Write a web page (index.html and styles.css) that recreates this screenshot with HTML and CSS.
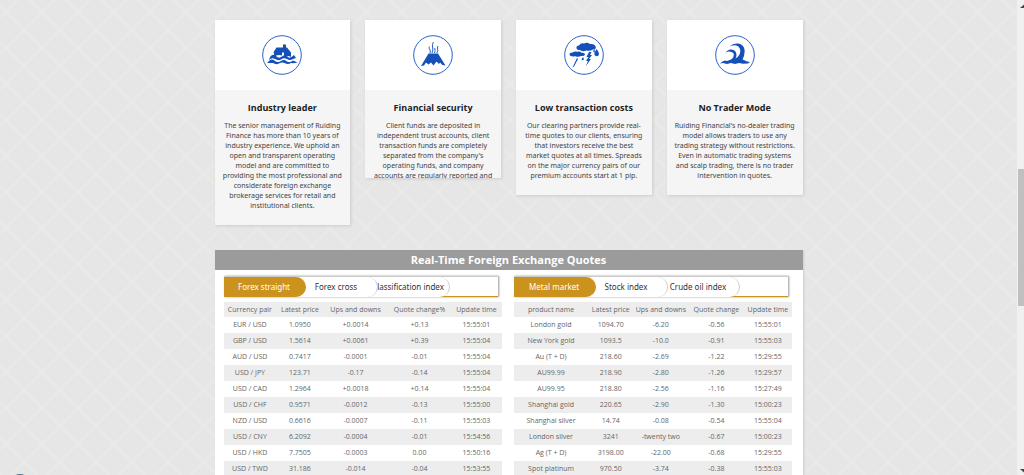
FILE: index.html
```html
<!DOCTYPE html>
<html lang="en">
<head>
<meta charset="utf-8">
<title>Real-Time Foreign Exchange Quotes</title>
<link rel="stylesheet" href="styles.css">
</head>
<body>
<div class="shell">
  <main class="page">
    <section class="features">
      <article class="card">
        <div class="card-icon">
          <svg viewBox="0 0 40 40" aria-hidden="true">
            <circle class="ring" cx="20" cy="20" r="19.3"/>
            <path d="M12 22V17.5L11 18L14.5 12.5H21V9.5H24V12.5H25L29 17.5V22Q26 20 24 22L22 20.5V17.5H20V20.5L17 20Q14 20 12 22Z"/>
            <path d="M8 22Q11 18 14 21Q17 24 20 21.5Q23 19 26 22Q28 24 32 20L34 23L31 24Q28 26 25 24Q22 22.500 19 24.500Q16 26 13 24Q10 22 7 25Z"/>
            <path d="M5 28L7.500 25.500Q10 23.500 13 26Q16 28 19 26Q22 24 25 26.500Q28 28 31 25.500L35.500 27.500Q32 28.500 29 28Q26 30 23 28.300Q20 26.800 17 28.500Q14 30 11 28Z"/>
          </svg>
        </div>
        <h2 class="card-title">Industry leader</h2>
        <p class="card-text">The senior management of Ruiding Finance has more than 10 years of industry experience. We uphold an open and transparent operating model and are committed to providing the most professional and considerate foreign exchange brokerage services for retail and institutional clients.</p>
      </article>
      <article class="card card-clipped">
        <div class="card-icon">
          <svg viewBox="0 0 40 40" aria-hidden="true">
            <circle class="ring" cx="20" cy="20" r="19.3"/>
            <path d="M15.500 18.500H25L32.500 30.500L29.500 30L27 27.500L26 29L23.500 26.500L20.500 30.500L18 27.500L15.500 29.500L13 27.500L11 30.500L8 31Z"/>
            <path class="smoke" d="M17 18Q18 16 16.500 14Q15.500 13 16.500 11.500M19 18Q20.500 15 19.500 12Q19 9 20.500 7M21.500 18Q22.500 16 21.800 13M23.800 18Q25.500 16 24.500 13Q24.500 12 25 11"/>
          </svg>
        </div>
        <h2 class="card-title">Financial security</h2>
        <p class="card-text">Client funds are deposited in independent trust accounts, client transaction funds are completely separated from the company's operating funds, and company accounts are regularly reported and</p>
      </article>
      <article class="card">
        <div class="card-icon">
          <svg viewBox="0 0 40 40" aria-hidden="true">
            <circle class="ring" cx="20" cy="20" r="19.3"/>
            <path d="M12.500 13Q12 10.500 15 10.500Q16.500 7.800 20 8.500Q23 6.800 26 9Q31 8.500 31.500 11.500Q33 14 29 14.500Q26 16.500 22.500 15.500Q18 17 16 15Q12.500 15 12.500 13Z"/>
            <path d="M5.500 19.500Q5.500 17.500 8.500 17.500Q10.500 15.800 13 16.800Q16 16 17.500 17.800Q21 17.500 21 19.500Q20.500 21.300 17 21Q14.500 22.500 11.500 21.300Q6 22 5.500 19.500Z"/>
            <path d="M13 23L8.500 32.500L10 31.500L14 24ZM25 17L22.500 22H24.500L22 26H24L21.500 31.500L27 24H25L28 20H26L27.500 17ZM32.500 14Q36 18 34.500 20.500Q32 22 30.500 20Q30 18 32.500 14ZM19 22Q20.500 24 19.500 25Q18 25.500 17.500 24.500ZM29 16L31 14L30.500 18Z"/>
          </svg>
        </div>
        <h2 class="card-title">Low transaction costs</h2>
        <p class="card-text">Our clearing partners provide real-time quotes to our clients, ensuring that investors receive the best market quotes at all times. Spreads on the major currency pairs of our premium accounts start at 1 pip.</p>
      </article>
      <article class="card">
        <div class="card-icon">
          <svg viewBox="0 0 40 40" aria-hidden="true">
            <circle class="ring" cx="20" cy="20" r="19.3"/>
            <path d="M14.500 11.500Q18 8 23 8.500Q29.500 9.500 29.700 16Q29.500 21 27.500 24.500L30 25.500L32 26.500L35 27L33 28.500L28 28.800L24 28L20 29L16 28L12 29L8 28L5 28.500L7.500 26.500L10 25.500L12 26L16 24.500Q19 22.500 18.800 19Q18 16.500 13.500 16.500Q11.800 16.800 10.500 18Q12.500 14.200 16.500 14.500Q21 15 21.500 19.500Q21.500 21.500 20.500 23.500Q25.500 20.500 25.300 15.500Q24.500 10.500 20 10.300Q17 10.300 14.500 11.500Z"/>
          </svg>
        </div>
        <h2 class="card-title">No Trader Mode</h2>
        <p class="card-text">Ruiding Financial's no-dealer trading model allows traders to use any trading strategy without restrictions. Even in automatic trading systems and scalp trading, there is no trader intervention in quotes.</p>
      </article>
    </section>

    <section class="quotes">
      <h2 class="quotes-title">Real-Time Foreign Exchange Quotes</h2>
      <div class="quotes-body">
        <div class="market">
          <div class="tabs">
            <button class="tab tab-active" type="button">Forex straight</button>
            <button class="tab" type="button">Forex cross</button>
            <button class="tab" type="button">Classification index</button>
          </div>
          <table class="rates">
            <colgroup><col class="f1"><col class="f2"><col class="f3"><col class="f4"><col class="f5"></colgroup>
            <thead><tr><th>Currency pair</th><th>Latest price</th><th>Ups and downs</th><th>Quote change%</th><th>Update time</th></tr></thead>
            <tbody>
              <tr><td>EUR / USD</td><td>1.0950</td><td>+0.0014</td><td>+0.13</td><td>15:55:01</td></tr>
              <tr><td>GBP / USD</td><td>1.5614</td><td>+0.0061</td><td>+0.39</td><td>15:55:04</td></tr>
              <tr><td>AUD / USD</td><td>0.7417</td><td>-0.0001</td><td>-0.01</td><td>15:55:04</td></tr>
              <tr><td>USD / JPY</td><td>123.71</td><td>-0.17</td><td>-0.14</td><td>15:55:04</td></tr>
              <tr><td>USD / CAD</td><td>1.2964</td><td>+0.0018</td><td>+0.14</td><td>15:55:04</td></tr>
              <tr><td>USD / CHF</td><td>0.9571</td><td>-0.0012</td><td>-0.13</td><td>15:55:00</td></tr>
              <tr><td>NZD / USD</td><td>0.6616</td><td>-0.0007</td><td>-0.11</td><td>15:55:03</td></tr>
              <tr><td>USD / CNY</td><td>6.2092</td><td>-0.0004</td><td>-0.01</td><td>15:54:56</td></tr>
              <tr><td>USD / HKD</td><td>7.7505</td><td>-0.0003</td><td>0.00</td><td>15:50:16</td></tr>
              <tr><td>USD / TWD</td><td>31.186</td><td>-0.014</td><td>-0.04</td><td>15:53:55</td></tr>
            </tbody>
          </table>
        </div>
        <div class="market">
          <div class="tabs">
            <button class="tab tab-active" type="button">Metal market</button>
            <button class="tab" type="button">Stock index</button>
            <button class="tab" type="button">Crude oil index</button>
          </div>
          <table class="rates">
            <colgroup><col class="m1"><col class="m2"><col class="m3"><col class="m4"><col class="m5"></colgroup>
            <thead><tr><th>product name</th><th>Latest price</th><th>Ups and downs</th><th>Quote change</th><th>Update time</th></tr></thead>
            <tbody>
              <tr><td>London gold</td><td>1094.70</td><td>-6.20</td><td>-0.56</td><td>15:55:01</td></tr>
              <tr><td>New York gold</td><td>1093.5</td><td>-10.0</td><td>-0.91</td><td>15:55:03</td></tr>
              <tr><td>Au (T + D)</td><td>218.60</td><td>-2.69</td><td>-1.22</td><td>15:29:55</td></tr>
              <tr><td>AU99.99</td><td>218.90</td><td>-2.80</td><td>-1.26</td><td>15:29:57</td></tr>
              <tr><td>AU99.95</td><td>218.80</td><td>-2.56</td><td>-1.16</td><td>15:27:49</td></tr>
              <tr><td>Shanghai gold</td><td>220.65</td><td>-2.90</td><td>-1.30</td><td>15:00:23</td></tr>
              <tr><td>Shanghai silver</td><td>14.74</td><td>-0.08</td><td>-0.54</td><td>15:55:04</td></tr>
              <tr><td>London silver</td><td>3241</td><td>-twenty two</td><td>-0.67</td><td>15:00:23</td></tr>
              <tr><td>Ag (T + D)</td><td>3198.00</td><td>-22.00</td><td>-0.68</td><td>15:29:55</td></tr>
              <tr><td>Spot platinum</td><td>970.50</td><td>-3.74</td><td>-0.38</td><td>15:55:03</td></tr>
            </tbody>
          </table>
        </div>
      </div>
    </section>
    <span class="floating-badge"></span>
  </main>
  <div class="scrollbar" aria-hidden="true">
    <svg class="arrow" viewBox="0 0 7 10"><path d="M3 8L7 4.500V8Z"/></svg>
    <div class="track"><div class="thumb"></div></div>
    <svg class="arrow" viewBox="0 0 7 10"><path d="M3 4L7 7.500V4Z"/></svg>
  </div>
</div>
</body>
</html>
```

FILE: styles.css
```css
* { box-sizing: border-box; }

body {
  margin: 0;
  font-family: "Open Sans", "Noto Sans", sans-serif;
  font-size: 7px;
  color: #444;
}

.shell {
  display: flex;
  height: 100vh;
  overflow: hidden;
}

.page {
  position: relative;
  flex: 1;
  overflow: hidden;
  padding: 20px 16px 0;
  background-color: #e6e6e6;
  background-image:
    linear-gradient(45deg, transparent 47%, #e9e9e7 49%, #e9e9e7 51%, transparent 53%),
    linear-gradient(-45deg, transparent 47%, #e9e9e7 49%, #e9e9e7 51%, transparent 53%);
  background-size: 36px 36px;
  background-position: 24px 30px;
}

.features,
.quotes {
  max-width: 588px;
  margin: 0 auto;
}

.features {
  display: grid;
  grid-template-columns: repeat(4, 1fr);
  gap: 15px;
  align-items: start;
}

.card {
  padding-bottom: 14px;
  background: #f5f5f5;
  box-shadow: 1px 1px 3px #ccc;
  text-align: center;
}

.card-clipped {
  max-height: 158px;
  overflow: hidden;
}

.card-icon {
  display: flex;
  align-items: center;
  justify-content: center;
  height: 70px;
  background: #fff;
}

.card-icon svg {
  width: 40px;
  height: 40px;
  fill: #1450b8;
}

.card-icon .ring,
.card-icon .smoke {
  fill: none;
  stroke: #2a62c4;
}

.card-title {
  margin: 0;
  padding: 10px 0 6px;
  font-size: 9px;
  line-height: 15px;
  color: #222;
}

.card-text {
  margin: 0;
  padding: 0 6px;
  font-family: "Noto Sans", "Open Sans", sans-serif;
  line-height: 10px;
}

.quotes {
  margin-top: 25px;
  background: #fff;
  box-shadow: 1px 1px 2px #ccc;
}

.quotes-title {
  margin: 0;
  background: #9b9b9b;
  color: #fff;
  font-size: 11px;
  line-height: 20px;
  text-align: center;
}

.quotes-body {
  display: grid;
  grid-template-columns: 1fr 1fr;
  gap: 12px;
  padding: 6px 11px 6px 9px;
}

.tabs {
  display: flex;
  height: 21px;
  margin: 0 4px 5px 0;
  border-top: 1px solid #ccc;
  border-bottom: 1px solid #cc921e;
  box-shadow: 1px 0 2px #999;
  isolation: isolate;
}

.tab {
  position: relative;
  display: flex;
  align-items: center;
  justify-content: center;
  width: 82px;
  height: 20px;
  padding: 0 0 2px;
  border: 0;
  border-right: 1px solid #ccc;
  border-radius: 0 10px 10px 0;
  background: #fff;
  color: #333;
  font-family: "Noto Sans", "Open Sans", sans-serif;
  font-size: 8px;
  white-space: nowrap;
}

.tab + .tab { margin-left: -10px; }
.tab:nth-child(1) { z-index: 3; }
.tab:nth-child(2) { z-index: 2; }
.tab:nth-child(3) { z-index: 1; }

.tab-active {
  border-color: #cc921e;
  background: #cc921e;
  color: #fff;
}

.rates {
  width: 100%;
  border-collapse: collapse;
  table-layout: fixed;
  color: #666;
}

.rates th,
.rates td {
  height: 16px;
  padding: 0;
  font-weight: 400;
  line-height: 10px;
  text-align: center;
  white-space: nowrap;
}

.rates thead tr,
.rates tbody tr:nth-child(even) { background: #ededed; }

.rates th { height: 15px; }

.f1 { width: 19%; }
.f2 { width: 17%; }
.f3 { width: 23%; }
.f4 { width: 23%; }
.f5 { width: 18%; }

.m1 { width: 27%; }
.m2 { width: 16%; }
.m3 { width: 20%; }
.m4 { width: 20%; }
.m5 { width: 17%; }

.floating-badge {
  position: absolute;
  left: 10px;
  bottom: -19px;
  width: 20px;
  height: 20px;
  border-radius: 50%;
  background: #47708f;
}

.scrollbar {
  display: flex;
  flex-direction: column;
  width: 7px;
  background: #f0f0f0;
}

.arrow {
  width: 7px;
  height: 10px;
  fill: #444;
}

.track {
  flex: 1;
  padding: 159px 0 0 1px;
}

.thumb {
  height: 137px;
  background: #c0c0c0;
}
```
